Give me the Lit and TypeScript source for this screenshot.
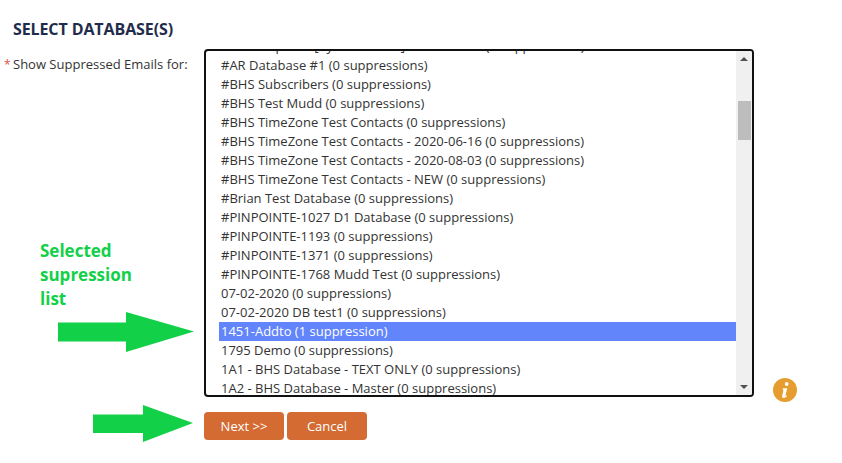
import { css, html, LitElement } from "lit";

const ROWS = [
    "#AR Samples 1 [by Mudd Test] - Master List (0 suppressions)",
    "#AR Database #1 (0 suppressions)",
    "#BHS Subscribers (0 suppressions)",
    "#BHS Test Mudd (0 suppressions)",
    "#BHS TimeZone Test Contacts (0 suppressions)",
    "#BHS TimeZone Test Contacts - 2020-06-16 (0 suppressions)",
    "#BHS TimeZone Test Contacts - 2020-08-03 (0 suppressions)",
    "#BHS TimeZone Test Contacts - NEW (0 suppressions)",
    "#Brian Test Database (0 suppressions)",
    "#PINPOINTE-1027 D1 Database (0 suppressions)",
    "#PINPOINTE-1193 (0 suppressions)",
    "#PINPOINTE-1371 (0 suppressions)",
    "#PINPOINTE-1768 Mudd Test (0 suppressions)",
    "07-02-2020 (0 suppressions)",
    "07-02-2020 DB test1 (0 suppressions)",
    "1451-Addto (1 suppression)",
    "1795 Demo (0 suppressions)",
    "1A1 - BHS Database - TEXT ONLY (0 suppressions)",
    "1A2 - BHS Database - Master (0 suppressions)",
];

const SELECTED = "1451-Addto (1 suppression)";

class AppRoot extends LitElement {
    static override styles = css`
        :host {
            display: block;
            position: relative;
            height: 463px;
            overflow: hidden;
            background: #fff;
            color: #333;
            font-family: "Open Sans", sans-serif;
            font-size: 13px;
        }

        .title {
            margin: 0;
            padding: 19px 0 0 13px;
            height: 30px;
            box-sizing: content-box;
            color: #1f2c4c;
            font-size: 16px;
            font-weight: 700;
            letter-spacing: -0.1px;
            line-height: 20px;
        }

        .form {
            display: grid;
            grid-template-columns: 204px 550px 1fr;
        }

        .label {
            padding: 5px 0 0 4px;
            line-height: 20px;
            white-space: nowrap;
        }

        .star {
            display: inline-block;
            width: 9px;
            color: #d9534f;
            font-size: 12px;
        }

        .listbox {
            display: flex;
            height: 344px;
            border: 2px solid #111;
            border-radius: 4px;
            overflow: hidden;
        }

        .rows {
            flex: 1;
            min-width: 0;
            margin: 0;
            padding: 0 0 0 13px;
            overflow: hidden;
            list-style: none;
        }

        .row {
            height: 19px;
            padding-left: 2px;
            line-height: 19px;
            white-space: nowrap;
        }

        .row:first-child {
            margin-top: -14px;
        }

        .row.selected {
            background: #6285fb;
            color: #fff;
        }

        .scrollbar {
            display: flex;
            flex-direction: column;
            justify-content: space-between;
            box-sizing: border-box;
            width: 16px;
            padding: 6px 0;
            background: #f0f0f0;
        }

        .scrollbar svg {
            display: block;
            margin: 0 auto;
        }

        .thumb {
            position: absolute;
            top: 101px;
            left: 738px;
            width: 13px;
            height: 39px;
            background: #bdbdbd;
        }

        .info {
            align-self: end;
            margin: 0 0 -5px 19px;
        }

        .actions {
            display: flex;
            gap: 3px;
            padding: 15px 0 0 204px;
        }

        button {
            width: 80px;
            height: 28px;
            padding: 0;
            border: 0;
            border-radius: 4px;
            background: #d36b33;
            color: #fff;
            font: inherit;
        }

        .note {
            position: absolute;
            top: 239px;
            left: 40px;
            color: #12d048;
            font-size: 17px;
            font-weight: 700;
            line-height: 24px;
        }

        .arrow {
            position: absolute;
        }

        .arrow-list {
            top: 312px;
            left: 58px;
        }

        .arrow-next {
            top: 405px;
            left: 93px;
        }
    `;

    override render() {
        return html`
            <h1 class="title">SELECT DATABASE(S)</h1>
            <div class="form">
                <div class="label"><span class="star">*</span>Show Suppressed Emails for:</div>
                <div class="listbox">
                    <ul class="rows">
                        ${ROWS.map(
                            (row) => html`<li class="row ${row === SELECTED ? "selected" : ""}">${row}</li>`,
                        )}
                    </ul>
                    <div class="scrollbar">
                        <svg width="8" height="4" viewBox="0 0 8 4"><path d="M4 0 8 4H0z" fill="#505050" /></svg>
                        <svg width="8" height="4" viewBox="0 0 8 4"><path d="M0 0h8L4 4z" fill="#505050" /></svg>
                    </div>
                </div>
                <svg class="info" width="24" height="24" viewBox="0 0 24 24">
                    <circle cx="12" cy="12" r="12" fill="#e59d2f" />
                    <circle cx="13.7" cy="6" r="1.9" fill="#fff" />
                    <path d="M10 10.2h4.2l-1.7 7.2c-.1.6.3.8 1.4.2l.2.7c-1.4 1.2-2.6 1.7-3.7 1.7-1.1 0-1.5-.8-1.2-2l1.3-6.2-1-.1z" fill="#fff" />
                </svg>
            </div>
            <div class="actions">
                <button>Next &gt;&gt;</button>
                <button>Cancel</button>
            </div>
            <div class="thumb"></div>
            <div class="note">Selected<br />supression<br />list</div>
            <svg class="arrow arrow-list" width="136" height="40" viewBox="0 0 136 40">
                <path d="M0 10.5h68V0l68 19.5L68 40V29.5H0z" fill="#12d048" />
            </svg>
            <svg class="arrow arrow-next" width="100" height="37" viewBox="0 0 100 37">
                <path d="M0 9.5h50V0l50 18-50 19V28H0z" fill="#12d048" />
            </svg>
        `;
    }
}

customElements.define("app-root", AppRoot);
